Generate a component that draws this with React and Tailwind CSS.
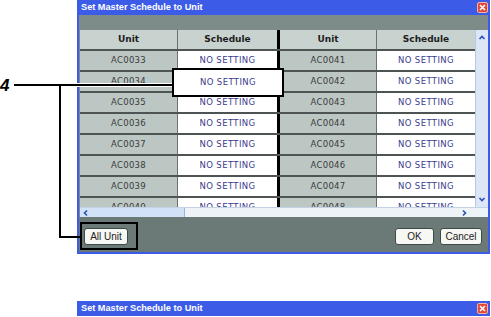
import React from "react";

const rows = [
  ["AC0033", "AC0041"],
  ["AC0034", "AC0042"],
  ["AC0035", "AC0043"],
  ["AC0036", "AC0044"],
  ["AC0037", "AC0045"],
  ["AC0038", "AC0046"],
  ["AC0039", "AC0047"],
  ["AC0040", "AC0048"],
];

function CloseBox() {
  return (
    <div className="w-[11px] h-[11px] bg-[#e0483a] border border-[#f5b3a8] rounded-[2px] flex items-center justify-center">
      <svg width="7" height="7" viewBox="0 0 7 7">
        <path d="M1 1L6 6M6 1L1 6" stroke="white" strokeWidth="1.6" />
      </svg>
    </div>
  );
}

function TitleBar() {
  return (
    <div className="h-[15px] bg-[#3c5ce8] flex items-center justify-between pl-[4px] pr-[2px]">
      <span className="text-white font-bold text-[9.2px] leading-none font-['Liberation_Sans',sans-serif]">
        Set Master Schedule to Unit
      </span>
      <CloseBox />
    </div>
  );
}

function Button({ children, w }) {
  return (
    <div
      className={`${w} h-[17px] bg-[#f7f7f4] border border-[#3c4a48] rounded-[3px] flex items-center justify-center text-[10px] text-[#222] font-['Liberation_Sans',sans-serif]`}
    >
      {children}
    </div>
  );
}

function Row({ a, b, head, hideLeft }) {
  const unit = head
    ? "bg-[#c8d2cf] font-bold text-[#1d1d1d] font-['DejaVu_Sans',sans-serif] text-[9px]"
    : "bg-[#bcc7c4] text-[#3a3a3a] font-['DejaVu_Sans',sans-serif] text-[8.5px] tracking-[0.3px]";
  const sched = head
    ? "bg-[#c8d2cf] font-bold text-[#1d1d1d] font-['DejaVu_Sans',sans-serif] text-[9px]"
    : "bg-white text-[#3b3b8c] font-['DejaVu_Sans',sans-serif] text-[8.5px] tracking-[0.4px]";
  return (
    <div className="flex shrink-0 h-[21px] border-b-2 border-[#4e5453]">
      <div className={`w-[98px] border-r border-[#6b7270] flex items-center justify-center ${unit}`}>{head ? "Unit" : a}</div>
      <div className={`w-[99px] flex items-center justify-center ${sched}`}>
        {head ? "Schedule" : hideLeft ? "" : "NO SETTING"}
      </div>
      <div className="w-[3px] bg-black" />
      <div className={`w-[97px] border-r border-[#6b7270] flex items-center justify-center ${unit}`}>{head ? "Unit" : b}</div>
      <div className={`w-[98px] flex items-center justify-center ${sched}`}>{head ? "Schedule" : "NO SETTING"}</div>
    </div>
  );
}

function Chevron({ dir }) {
  const d = {
    up: "M1.5 5L4 2.5L6.5 5",
    down: "M1.5 3L4 5.5L6.5 3",
    left: "M5 1.5L2.5 4L5 6.5",
    right: "M3 1.5L5.5 4L3 6.5",
  }[dir];
  return (
    <svg width="8" height="8" viewBox="0 0 8 8">
      <path d={d} stroke="#2a4fb8" strokeWidth="1.6" fill="none" />
    </svg>
  );
}

export default function App() {
  return (
    <div className="relative w-[491px] h-[317px] bg-white overflow-hidden">
      {/* main dialog */}
      <div className="ml-[77px] w-[413px] h-[254px] bg-[#3c5ce8] flex flex-col">
        <TitleBar />
        <div className="flex-1 mx-[2px] mb-[2px] bg-[#7d8c89] flex flex-col">
          <div className="h-[15px] shrink-0" />
          <div className="flex h-[177px] pl-[1px]">
            <div className="w-[395px] flex flex-col overflow-hidden bg-[#bcc7c4]">
              <Row head />
              {rows.map(([a, b], i) => (
                <Row key={a} a={a} b={b} hideLeft={i === 1} />
              ))}
            </div>
            <div className="w-[13px] bg-[#dbe7f7] border-l border-[#b8c8e0] flex flex-col items-center justify-between py-[4px]">
              <Chevron dir="up" />
              <Chevron dir="down" />
            </div>
          </div>
          <div className="h-[10px] ml-[1px] flex items-center bg-[#eef3f8] border-t border-[#c4d2e6]">
            <div className="w-[105px] h-full bg-[#d2e2f6] border-r border-[#9fb4d4] flex items-center pl-[2px]">
              <Chevron dir="left" />
            </div>
            <div className="flex-1" />
            <div className="pr-[20px] flex items-center">
              <Chevron dir="right" />
            </div>
          </div>
          <div className="flex-1 bg-[#6b7a77] flex items-start justify-between pt-[11px] pl-[5px] pr-[6px]">
            <Button w="w-[44px]">All Unit</Button>
            <div className="flex gap-[6px]">
              <Button w="w-[39px]">OK</Button>
              <Button w="w-[42px]">Cancel</Button>
            </div>
          </div>
        </div>
      </div>

      {/* second dialog, cut off */}
      <div className="ml-[77px] mt-[47px] w-[413px]">
        <TitleBar />
      </div>

      {/* callout overlay */}
      <div className="absolute left-0 top-[77px] text-[17px] font-bold italic leading-none text-black font-['Liberation_Sans',sans-serif]">
        4
      </div>
      <div className="absolute left-[14px] top-[84px] w-[159px] h-[2px] bg-black shadow-[0_0_0_1px_white]" />
      <div className="absolute left-[59px] top-[84px] w-[2px] h-[154px] bg-black" />
      <div className="absolute left-[59px] top-[236px] w-[22px] h-[2px] bg-black" />
      <div className="absolute left-[172px] top-[68px] w-[112px] h-[29px] border-2 border-black bg-white flex items-center justify-center text-[8.5px] tracking-[0.4px] text-[#3b3b8c] font-['DejaVu_Sans',sans-serif]">
        NO SETTING
      </div>
      <div className="absolute left-[80px] top-[222px] w-[58px] h-[28px] border-2 border-black" />
    </div>
  );
}
